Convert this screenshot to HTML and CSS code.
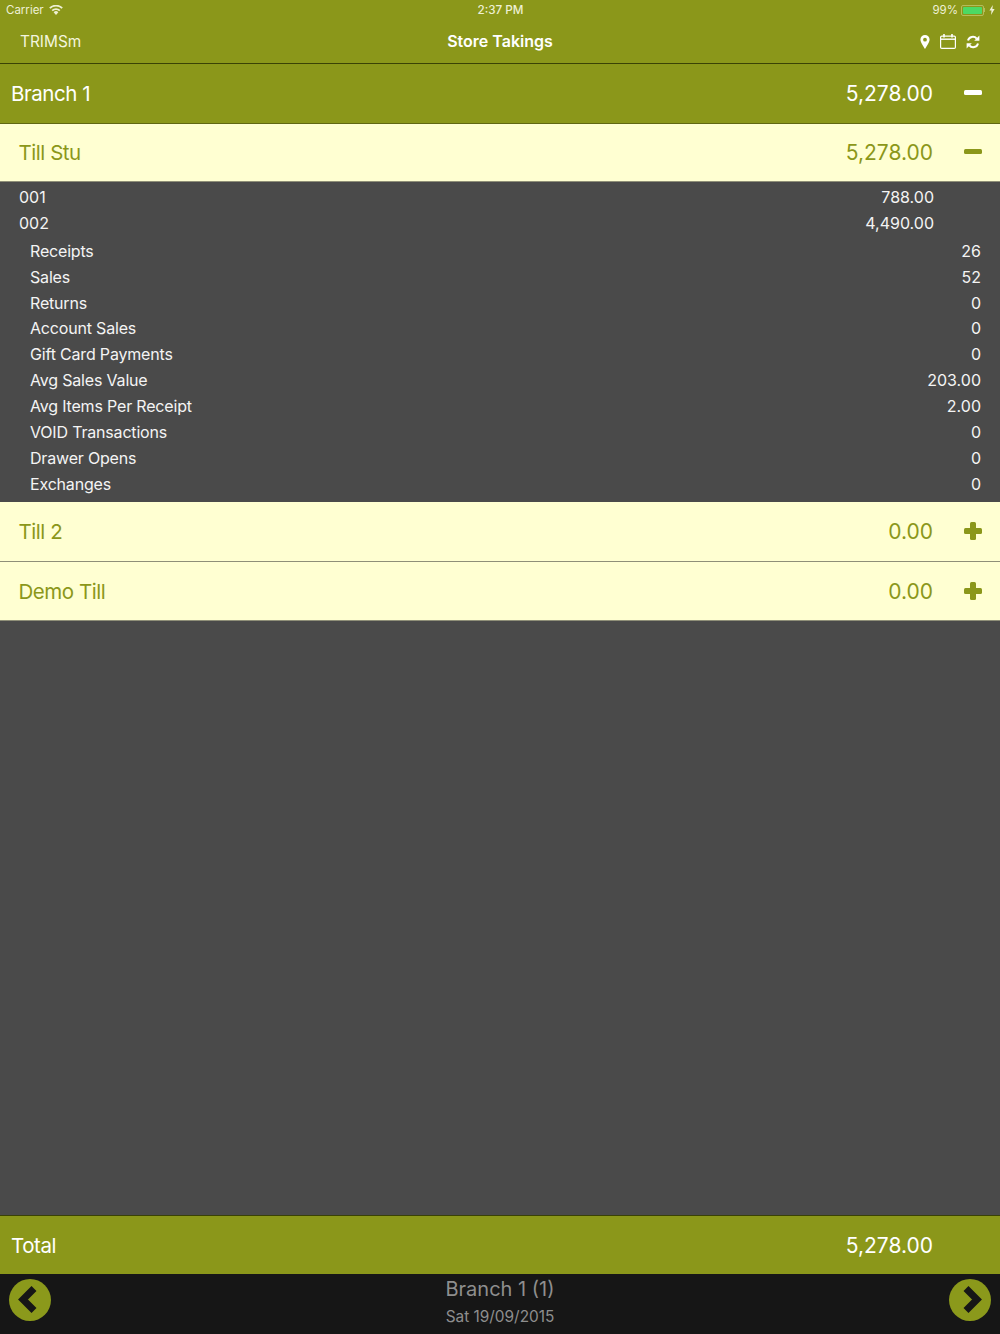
FILE: index.html
```html
<!DOCTYPE html>
<html lang="en">
<head>
  <meta charset="UTF-8" />
  <meta name="viewport" content="width=device-width, initial-scale=1.0" />
  <title>Store Takings</title>
  <link rel="stylesheet" href="styles.css">
</head>
<body>
  <div class="app">
    <header class="top-bar">
      <div class="status-bar">
        <div class="status-left">
          <span>Carrier</span>
          <svg class="wifi" viewBox="0 0 14 10" width="14" height="10" aria-hidden="true">
            <path d="M7 10 4.6 7.3a3.4 3.4 0 0 1 4.8 0z" fill="currentColor"/>
            <path d="M3.2 5.6a5.4 5.4 0 0 1 7.6 0" fill="none" stroke="currentColor" stroke-width="1.8"/>
            <path d="M.8 3.2a8.8 8.8 0 0 1 12.4 0" fill="none" stroke="currentColor" stroke-width="1.8"/>
          </svg>
        </div>
        <div class="status-time">2:37 PM</div>
        <div class="status-right">
          <span>99%</span>
          <span class="battery"><span class="battery-fill"></span></span>
          <span class="battery-nub"></span>
          <svg viewBox="0 0 6 10" width="6" height="10" aria-hidden="true">
            <path d="M3.8 0 .4 5.6h2.1L2 10l3.6-6H3.4z" fill="currentColor"/>
          </svg>
        </div>
      </div>
      <nav class="nav-bar">
        <div class="nav-back">TRIMSm</div>
        <h1 class="nav-title">Store Takings</h1>
        <div class="nav-icons">
          <svg viewBox="0 0 10 14" width="10" height="14" aria-hidden="true">
            <path fill-rule="evenodd" d="M5 0a4.6 4.6 0 0 1 4.6 4.6C9.6 7.2 6.6 11.6 5 14 3.4 11.6.4 7.2.4 4.6A4.6 4.6 0 0 1 5 0zm0 2.8a1.9 1.9 0 1 0 0 3.8 1.9 1.9 0 0 0 0-3.8z" fill="#fff"/>
          </svg>
          <svg viewBox="0 0 16 15" width="16" height="15" aria-hidden="true">
            <rect x=".6" y="2.1" width="14.8" height="12.3" rx="1.2" fill="none" stroke="#fff" stroke-width="1.2"/>
            <path d="M.6 5.2h14.8" stroke="#fff" stroke-width="1.4"/>
            <path d="M4 0v3.4M12 0v3.4" stroke="#fff" stroke-width="1.6"/>
          </svg>
          <svg viewBox="0 0 14 14" width="14" height="14" aria-hidden="true">
            <path d="M2 5.6A5 5 0 0 1 10.7 3.6" fill="none" stroke="#fff" stroke-width="2"/>
            <path d="M13.4 .6v5.2H8.2z" fill="#fff"/>
            <path d="M12 8.4A5 5 0 0 1 3.3 10.4" fill="none" stroke="#fff" stroke-width="2"/>
            <path d="M.6 13.4V8.2h5.2z" fill="#fff"/>
          </svg>
        </div>
      </nav>
    </header>

    <section class="row row-branch">
      <span class="row-name">Branch 1</span>
      <span class="row-value">5,278.00</span>
      <span class="toggle toggle-minus"></span>
    </section>

    <section class="row row-till row-open">
      <span class="row-name">Till Stu</span>
      <span class="row-value">5,278.00</span>
      <span class="toggle toggle-minus"></span>
    </section>

    <div class="details">
      <div class="line line-receipt"><span>001</span><span>788.00</span></div>
      <div class="line line-receipt"><span>002</span><span>4,490.00</span></div>
      <div class="stats">
        <div class="line"><span class="stat-name">Receipts</span><span>26</span></div>
        <div class="line"><span class="stat-name">Sales</span><span>52</span></div>
        <div class="line"><span class="stat-name">Returns</span><span>0</span></div>
        <div class="line"><span class="stat-name">Account Sales</span><span>0</span></div>
        <div class="line"><span class="stat-name">Gift Card Payments</span><span>0</span></div>
        <div class="line"><span class="stat-name">Avg Sales Value</span><span>203.00</span></div>
        <div class="line"><span class="stat-name">Avg Items Per Receipt</span><span>2.00</span></div>
        <div class="line"><span class="stat-name">VOID Transactions</span><span>0</span></div>
        <div class="line"><span class="stat-name">Drawer Opens</span><span>0</span></div>
        <div class="line"><span class="stat-name">Exchanges</span><span>0</span></div>
      </div>
    </div>

    <section class="row row-till">
      <span class="row-name">Till 2</span>
      <span class="row-value">0.00</span>
      <span class="toggle toggle-plus"></span>
    </section>

    <section class="row row-till row-last">
      <span class="row-name">Demo Till</span>
      <span class="row-value">0.00</span>
      <span class="toggle toggle-plus"></span>
    </section>

    <div class="spacer"></div>

    <section class="row row-total">
      <span class="row-name">Total</span>
      <span class="row-value">5,278.00</span>
      <span class="toggle"></span>
    </section>

    <footer class="pager">
      <svg class="pager-btn" viewBox="0 0 42 42" width="42" height="42" aria-hidden="true">
        <circle cx="21" cy="21" r="21" fill="#8b991b"/>
        <path d="M25 9.5 14 20.5 25 31.5" fill="none" stroke="#161616" stroke-width="7"/>
      </svg>
      <div class="pager-label">
        <div class="pager-name">Branch 1 (1)</div>
        <div class="pager-date">Sat 19/09/2015</div>
      </div>
      <svg class="pager-btn" viewBox="0 0 42 42" width="42" height="42" aria-hidden="true">
        <circle cx="21" cy="21" r="21" fill="#8b991b"/>
        <path d="M17 9.5 28 20.5 17 31.5" fill="none" stroke="#161616" stroke-width="7"/>
      </svg>
    </footer>
  </div>
</body>
</html>
```

FILE: styles.css
```css
:root {
  --olive: #8b971a;
  --cream: #ffffd2;
  --grey: #4a4a4a;
  --dark: #161616;
}

body {
  margin: 0;
  font-family: Inter, "Liberation Sans", sans-serif;
  background: var(--grey);
  color: #fff;
}

.app {
  display: flex;
  flex-direction: column;
  height: 1334px;
  width: 1000px;
  overflow: hidden;
}

.top-bar {
  height: 63px;
  flex: none;
  background: var(--olive);
  border-bottom: 1px solid #3a4205;
}

.status-bar {
  height: 20px;
  display: grid;
  grid-template-columns: 1fr auto 1fr;
  align-items: center;
  padding: 0 5px 0 6px;
  font-size: 11.5px;
  color: #eef0d4;
}

.status-left,
.status-right {
  display: flex;
  align-items: center;
  gap: 5px;
}

.status-right {
  justify-content: flex-end;
  gap: 3px;
}

.status-time {
  font-size: 11.7px;
  font-weight: 500;
}

.battery {
  width: 23px;
  height: 11px;
  box-sizing: border-box;
  padding: 1px;
  border: 1px solid #b4bc5c;
  border-radius: 2px;
}

.battery-fill {
  display: block;
  height: 100%;
  background: #4cd964;
  border-radius: 1px;
}

.battery-nub {
  width: 1px;
  height: 4px;
  margin: 0 1px 0 -3px;
  background: #b4bc5c;
}

.nav-bar {
  height: 43px;
  display: grid;
  grid-template-columns: 1fr auto 1fr;
  align-items: center;
  padding: 0 20px;
}

.nav-back {
  font-size: 15.4px;
  color: #f3f5de;
}

.nav-title {
  margin: 0 0 2px;
  font-size: 16px;
  font-weight: 600;
}

.nav-icons {
  display: flex;
  justify-content: flex-end;
  align-items: center;
  gap: 10px;
}

.row {
  flex: none;
  display: flex;
  align-items: center;
  box-sizing: border-box;
  height: 60px;
  padding-right: 18px;
  font-size: 21px;
  border-bottom: 1px solid #8f8f78;
}

.row-name {
  flex: 1;
  font-size: 20.5px;
  letter-spacing: -0.45px;
}

.row-value {
  margin-right: 31px;
}

.row-branch {
  background: var(--olive);
  padding-left: 11px;
  border-bottom-color: #5f6712;
}

.row-till {
  background: var(--cream);
  color: var(--olive);
  padding-left: 18.5px;
}

.row-open {
  height: 58px;
}

.row-last {
  height: 59px;
}

.row-total {
  height: 59px;
  background: var(--olive);
  padding-left: 11px;
  border-top: 1px solid #3a4205;
  border-bottom: 0;
}

.toggle {
  position: relative;
  width: 18px;
  height: 18px;
  margin-top: -1px;
}

.toggle-minus::before,
.toggle-plus::before,
.toggle-plus::after {
  content: "";
  position: absolute;
  background: currentColor;
  border-radius: 1.5px;
  left: 0;
  top: 6px;
  width: 18px;
  height: 6px;
}

.toggle-minus::before {
  height: 5px;
}

.toggle-plus::after {
  left: 6px;
  top: 0;
  width: 6px;
  height: 18px;
}

.details {
  flex: none;
  height: 320px;
  box-sizing: border-box;
  padding-top: 2px;
  font-size: 16px;
  color: #f4f4f4;
}

.line {
  display: flex;
  justify-content: space-between;
  align-items: center;
  height: 25.9px;
}

.line-receipt {
  padding: 0 66px 0 19px;
}

.stats {
  padding: 2px 19px 0 30px;
}

.stat-name {
  letter-spacing: -0.18px;
}

.spacer {
  flex: 1;
}

.pager {
  flex: none;
  height: 60px;
  background: var(--dark);
  display: flex;
  align-items: center;
  justify-content: space-between;
  padding: 0 9px;
}

.pager-btn {
  flex: none;
  margin-bottom: 8px;
}

.pager-label {
  text-align: center;
  color: #8e8e8e;
  margin-bottom: 5px;
}

.pager-name {
  font-size: 20px;
  line-height: 30px;
}

.pager-date {
  margin-top: 1px;
  font-size: 15.4px;
  line-height: 24px;
}
```
